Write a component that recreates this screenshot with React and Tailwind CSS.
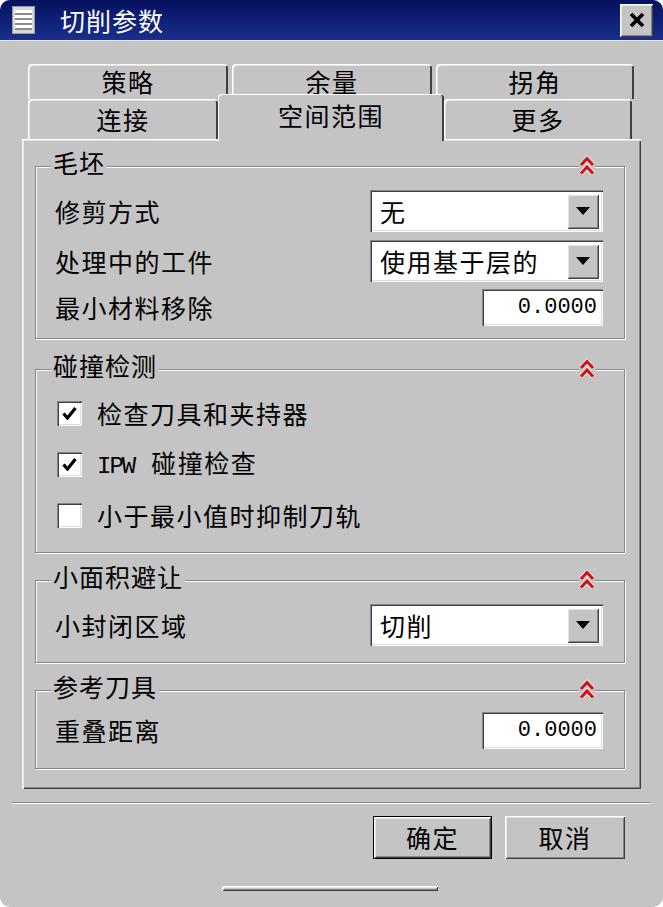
import React from 'react';

const RAISED =
  'shadow-[inset_1px_1px_0_#ffffff,inset_-1px_-1px_0_#404040,inset_2px_2px_0_#e4e4e4,inset_-2px_-2px_0_#858585]';
const SUNKEN =
  'shadow-[inset_1px_1px_0_#858585,inset_2px_2px_0_#404040,inset_-1px_-1px_0_#ffffff,inset_-2px_-2px_0_#dcdcdc]';

function Chevron({ className }) {
  return (
    <svg className={className} width="16" height="22" viewBox="0 0 16 22">
      <polyline points="2,10 8,3.5 14,10" fill="none" stroke="#ffffff" strokeWidth="4.4" />
      <polyline points="2,18.5 8,12 14,18.5" fill="none" stroke="#ffffff" strokeWidth="4.4" />
      <polyline points="2,10 8,3.5 14,10" fill="none" stroke="#c8141c" strokeWidth="3.2" />
      <polyline points="2,18.5 8,12 14,18.5" fill="none" stroke="#c8141c" strokeWidth="3.2" />
    </svg>
  );
}

function Group({ title, className, children }) {
  return (
    <div className={`relative border border-[#858585] shadow-[inset_1px_1px_0_#ffffff,1px_1px_0_#ffffff] ${className}`}>
      <span className="absolute left-[15px] -top-[19px] px-[2px] bg-[#c4c4c4] text-[25px] leading-[28px] tracking-[1px]">
        {title}
      </span>
      <Chevron className="absolute right-[29px] -top-[12px] bg-[#c4c4c4]" />
      {children}
    </div>
  );
}

function Select({ value }) {
  return (
    <div className={`w-[233px] h-[42px] bg-white flex items-center pl-[3px] pr-[4px] ${SUNKEN}`}>
      <span className="flex-1 pl-[7px] text-[25px] leading-none tracking-[1.5px]">{value}</span>
      <div className={`w-[32px] h-[35px] bg-[#c4c4c4] flex items-center justify-center ${RAISED}`}>
        <svg width="14" height="8" viewBox="0 0 14 8">
          <path d="M0 0h14L7 8z" fill="#000" />
        </svg>
      </div>
    </div>
  );
}

function NumberInput({ value }) {
  return (
    <div className={`w-[121px] h-[37px] bg-white flex items-center justify-end pr-[6px] ${SUNKEN}`}>
      <span className="font-['Liberation_Mono',monospace] text-[22px] leading-none">{value}</span>
    </div>
  );
}

function Checkbox({ checked, label, mono }) {
  return (
    <div className="flex items-center h-[25px] gap-[15px]">
      <div className={`w-[25px] h-[25px] bg-white flex items-center justify-center ${SUNKEN}`}>
        {checked && (
          <svg width="15" height="13" viewBox="0 0 15 13">
            <path d="M1.5 6.5l4 4.5 8-10" fill="none" stroke="#000" strokeWidth="3.2" />
          </svg>
        )}
      </div>
      <span className="text-[25px] leading-none tracking-[1.5px]">
        {mono && (
          <span className="font-['Liberation_Mono',monospace] text-[24px] tracking-[-2px] mr-[17px]">{mono}</span>
        )}
        {label}
      </span>
    </div>
  );
}

function Tab({ label, width, height, selected }) {
  return (
    <div
      className={`${width} ${height} rounded-t-[4px] bg-[#c4c4c4] flex items-center justify-center text-[25px] tracking-[1.5px] leading-none ${
        selected
          ? 'relative z-10 -mb-[2px] pb-[4px] shadow-[inset_1px_1px_0_#ffffff,inset_-2px_0_0_#404040]'
          : 'shadow-[inset_1px_1px_0_#ffffff,inset_2px_2px_0_#e4e4e4,inset_-2px_0_0_#404040]'
      }`}
    >
      {label}
    </div>
  );
}

export default function App() {
  return (
    <div className="w-[663px] h-[907px] bg-white">
      <div className="w-full h-full rounded-[10px] overflow-hidden bg-[#c4c4c4] flex flex-col text-black font-['Noto_Sans_CJK_SC','Noto_Sans',sans-serif]">
        {/* title bar */}
        <div className="h-[41px] shrink-0 bg-gradient-to-b from-[#06115e] to-[#1a2f8c] flex items-center pl-[12px] pr-[10px] border-b border-[#e8e8e8]">
          <svg width="23" height="28" viewBox="0 0 23 28">
            <rect width="23" height="28" fill="#9a9a9a" />
            <rect x="1" y="1" width="21" height="26" fill="#d8d8d8" />
            <rect x="3" y="4" width="17" height="3" fill="#ffffff" />
            <rect x="3" y="9" width="17" height="3" fill="#ffffff" />
            <rect x="3" y="14" width="17" height="3" fill="#ffffff" />
            <rect x="3" y="19" width="17" height="3" fill="#ffffff" />
            <rect x="3" y="7" width="17" height="2" fill="#8c8c8c" />
            <rect x="3" y="12" width="17" height="2" fill="#8c8c8c" />
            <rect x="3" y="17" width="17" height="2" fill="#8c8c8c" />
            <rect x="3" y="22" width="17" height="2" fill="#8c8c8c" />
          </svg>
          <span className="ml-[25px] flex-1 text-white text-[25px] leading-none tracking-[1px]">切削参数</span>
          <div className={`w-[33px] h-[33px] bg-[#c4c4c4] flex items-center justify-center ${RAISED}`}>
            <svg width="16" height="16" viewBox="0 0 16 16">
              <path d="M2 2l12 12M14 2L2 14" stroke="#000" strokeWidth="3.6" />
            </svg>
          </div>
        </div>

        {/* tabs + panel */}
        <div className="px-[22px] pt-[23px]">
          <div className="flex h-[35px] pl-[6px] gap-[4px]">
            <Tab label="策略" width="w-[200px]" height="h-[35px]" />
            <Tab label="余量" width="w-[200px]" height="h-[35px]" />
            <Tab label="拐角" width="w-[198px]" height="h-[35px]" />
          </div>
          <div className="flex items-end h-[40px] pl-[6px]">
            <Tab label="连接" width="w-[190px]" height="h-[40px]" />
            <Tab label="空间范围" width="w-[226px]" height="h-[47px]" selected />
            <Tab label="更多" width="w-[188px]" height="h-[40px]" />
          </div>

          <div className="h-[650px] pt-[27px] pl-[13px] pr-[16px] shadow-[inset_1px_1px_0_#ffffff,inset_2px_2px_0_#e4e4e4,inset_-1px_-1px_0_#404040,inset_-2px_-2px_0_#858585]">
            <Group title="毛坯" className="pt-[23px] pb-[12px] pl-[19px] pr-[21px] flex flex-col">
              <div className="flex items-center justify-between h-[42px]">
                <span className="text-[25px] leading-none tracking-[1.5px]">修剪方式</span>
                <Select value="无" />
              </div>
              <div className="flex items-center justify-between h-[42px] mt-[8px]">
                <span className="text-[25px] leading-none tracking-[1.5px]">处理中的工件</span>
                <Select value="使用基于层的" />
              </div>
              <div className="flex items-center justify-between h-[37px] mt-[7px]">
                <span className="text-[25px] leading-none tracking-[1.5px]">最小材料移除</span>
                <NumberInput value="0.0000" />
              </div>
            </Group>

            <Group title="碰撞检测" className="mt-[30px] pt-[31px] pb-[24px] pl-[21px] flex flex-col gap-[26px]">
              <Checkbox checked label="检查刀具和夹持器" />
              <Checkbox checked mono="IPW" label="碰撞检查" />
              <Checkbox label="小于最小值时抑制刀轨" />
            </Group>

            <Group title="小面积避让" className="mt-[27px] pt-[23px] pb-[16px] pl-[19px] pr-[21px]">
              <div className="flex items-center justify-between h-[42px]">
                <span className="text-[25px] leading-none tracking-[1.5px]">小封闭区域</span>
                <Select value="切削" />
              </div>
            </Group>

            <Group title="参考刀具" className="mt-[27px] pt-[21px] pb-[19px] pl-[19px] pr-[21px]">
              <div className="flex items-center justify-between h-[37px]">
                <span className="text-[25px] leading-none tracking-[1.5px]">重叠距离</span>
                <NumberInput value="0.0000" />
              </div>
            </Group>
          </div>
        </div>

        {/* separator */}
        <div className="mx-[12px] mt-[13px] h-[2px] border-t border-[#858585] border-b border-b-white" />

        {/* buttons */}
        <div className="flex justify-end gap-[13px] pr-[38px] mt-[12px]">
          <div className="w-[119px] h-[43px] border border-black">
            <div className={`w-full h-full flex items-center justify-center text-[25px] leading-none tracking-[1.5px] ${RAISED}`}>
              确定
            </div>
          </div>
          <div className={`w-[120px] h-[43px] flex items-center justify-center text-[25px] leading-none tracking-[1.5px] ${RAISED}`}>
            取消
          </div>
        </div>

        {/* grip */}
        <div className={`ml-[222px] mt-[27px] w-[216px] h-[5px] ${RAISED}`} />
      </div>
    </div>
  );
}
